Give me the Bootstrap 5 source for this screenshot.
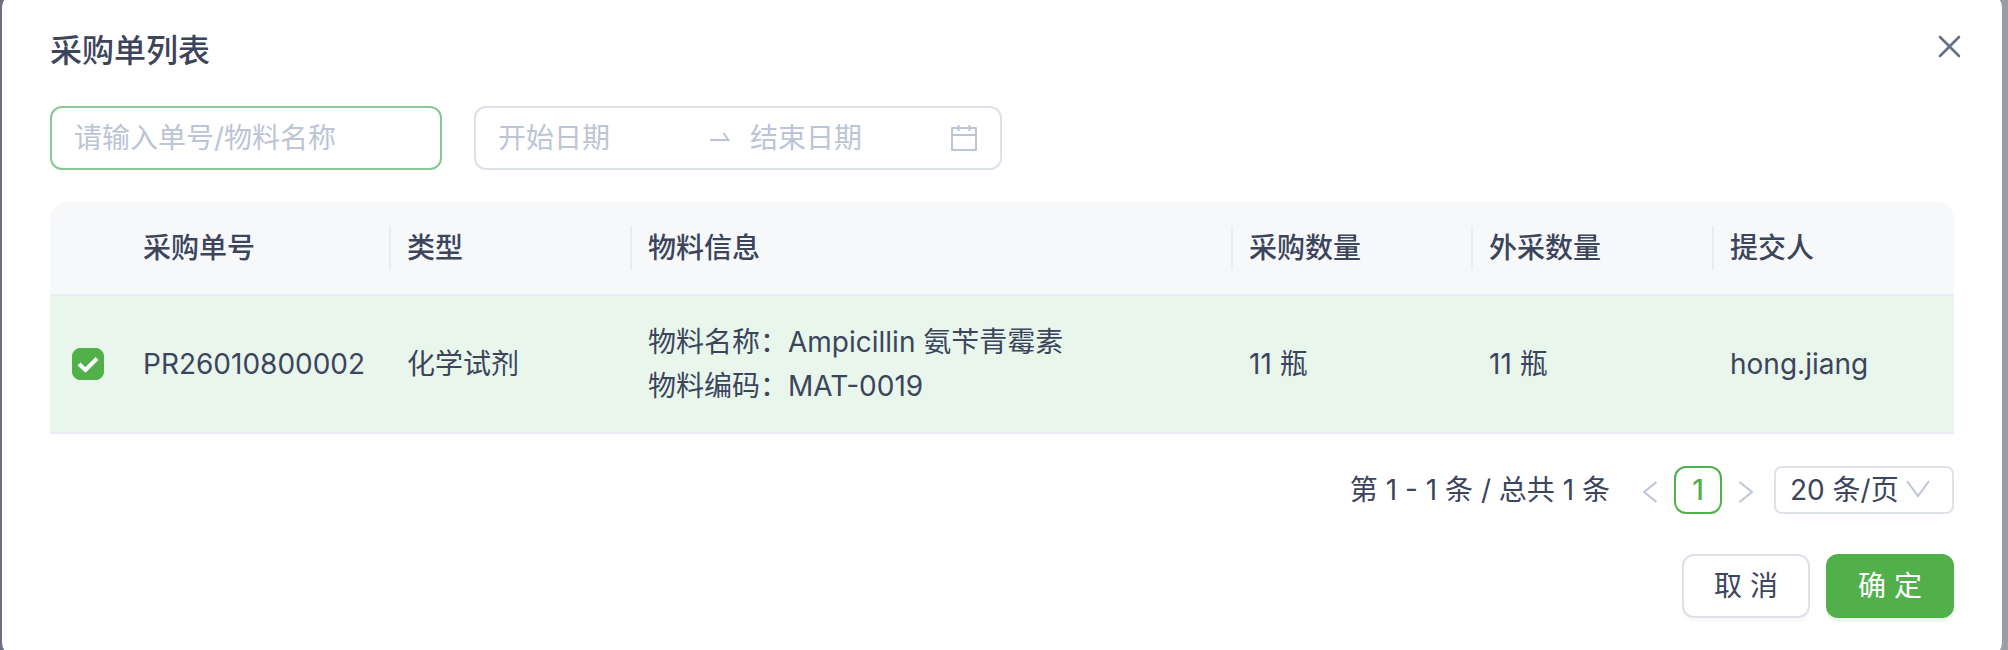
<!DOCTYPE html>
<html lang="zh-CN">
<head>
<meta charset="utf-8">
<meta name="viewport" content="width=device-width, initial-scale=1">
<title>采购单列表</title>
<link href="https://cdn.jsdelivr.net/npm/bootstrap@5.3.0/dist/css/bootstrap.min.css" rel="stylesheet">
<style>
  :root { --ink: #3c455c; --muted: #bcc4d6; --line: #dde1e9; --rule: #e9edf3; --green: #52b04a; }
  body {
    font-family: Inter, "Noto Sans CJK SC", sans-serif;
    font-size: 28px; line-height: 44px; color: var(--ink);
    background: linear-gradient(90deg, #6b7080, #9a9da6);
    overflow: hidden;
  }
  .dialog-panel { margin: -8px 6px 0 2px; padding: 36px 48px 40px; border-radius: 16px; background: #fff; }
  .dialog-title { font-size: 32px; line-height: 46px; font-weight: 500; }
  .icon-btn { border: 0; padding: 0; margin-right: -10px; background: none; line-height: 0; color: #667085; }
  .filters { gap: 32px; margin-top: 32px; }
  .field { height: 64px; border: 2px solid var(--line); border-radius: 12px; padding: 0 22px; background: #fff; color: var(--ink); }
  .field-search { width: 392px; border-color: #85c993; outline: 0; }
  .field-range { width: 528px; }
  .field-range input { flex: 1 1 0; min-width: 0; border: 0; padding: 0; outline: 0; background: none; color: var(--ink); }
  input::placeholder { color: var(--muted); opacity: 1; }
  .range-sep { width: 60px; }
  .muted { color: var(--muted); }
  .orders { table-layout: fixed; margin: 32px 0; color: var(--ink); border-collapse: separate; border-spacing: 0; }
  .orders > :not(caption) > * > * { padding: 24px 16px; border-bottom: 2px solid var(--rule); color: var(--ink); box-shadow: none; }
  .orders thead th { position: relative; font-weight: 500; background: #f7f8fa; }
  .orders thead th:first-child { border-top-left-radius: 16px; }
  .orders thead th:last-child { border-top-right-radius: 16px; }
  .orders thead th.split::after { content: ""; position: absolute; right: 0; top: 24px; bottom: 24px; width: 2px; background: var(--rule); }
  .orders tbody td { background: #e9f6ec; vertical-align: middle; }
  .orders .form-check-input { display: block; width: 32px; height: 32px; margin: 0 0 0 6px; border-radius: 8px; }
  .orders .form-check-input:checked {
    border-color: var(--green); background-color: var(--green); background-size: 32px 32px; background-position: center;
    background-image: url("data:image/svg+xml,%3Csvg xmlns='http://www.w3.org/2000/svg' viewBox='0 0 32 32'%3E%3Cpath d='M7 16l6.500 6L25 10.500' fill='none' stroke='%23fff' stroke-width='4'/%3E%3C/svg%3E");
  }
  .c-check { width: 77px; }
  .c-no { width: 264px; }
  .c-info { width: 601px; }
  .c-std { width: 240px; }
  .c-wide { width: 241px; }
  .pager button { width: 48px; height: 48px; border: 0; padding: 0; background: none; border-radius: 12px; }
  .pager .current { border: 2px solid var(--green); color: var(--green); font-weight: 500; line-height: 44px; }
  .page-size {
    appearance: none; width: 180px; height: 48px; margin-left: 4px; padding: 0 14px;
    border: 2px solid var(--line); border-radius: 8px; color: var(--ink);
    background: #fff url("data:image/svg+xml,%3Csvg xmlns='http://www.w3.org/2000/svg' width='24' height='20' viewBox='0 0 24 20'%3E%3Cpath d='M1 1l11 15L23 1' fill='none' stroke='%23bcc4d6' stroke-width='2'/%3E%3C/svg%3E") no-repeat right 22px center;
  }
  .actions { margin-top: 40px; }
  .btn-act { min-width: 128px; height: 64px; border: 2px solid var(--line); border-radius: 12px; padding: 0 16px; font-size: 28px; line-height: 44px; color: var(--ink); background: #fff; box-shadow: 0 4px 0 rgba(0,0,0,.02); }
  .btn-act.ok { border-color: var(--green); background: var(--green); color: #fff; box-shadow: 0 4px 0 rgba(82,176,74,.1); }
</style>
</head>
<body>
<main class="dialog-panel" role="dialog" aria-labelledby="dialogTitle">
  <header class="d-flex justify-content-between align-items-start">
    <h1 class="dialog-title mb-0" id="dialogTitle">采购单列表</h1>
    <button type="button" class="icon-btn" aria-label="关闭">
      <svg width="32" height="36" viewBox="0 0 32 36" fill="none" stroke="currentColor" stroke-width="2.600" stroke-linecap="round"><path d="M8 9l19 19M27 9L8 28"/></svg>
    </button>
  </header>

  <form class="filters d-flex flex-wrap">
    <input type="text" class="field field-search" placeholder="请输入单号/物料名称" aria-label="单号/物料名称">
    <div class="field field-range d-flex align-items-center">
      <input type="text" placeholder="开始日期" aria-label="开始日期">
      <span class="range-sep muted d-flex justify-content-center">
        <svg width="20" height="20" viewBox="0 0 20 20" fill="none" stroke="currentColor" stroke-width="2"><path d="M0 12h18.500L13.500 5"/></svg>
      </span>
      <input type="text" placeholder="结束日期" aria-label="结束日期">
      <svg class="muted ms-2" width="28" height="28" viewBox="0 0 28 28" fill="none" stroke="currentColor" stroke-width="2" stroke-linejoin="round"><path d="M2 4h24v22H2zM2 11h24M8.500 1v6M19.500 1v6"/></svg>
    </div>
  </form>

  <table class="table orders">
    <colgroup>
      <col class="c-check"><col class="c-no"><col class="c-wide"><col class="c-info"><col class="c-std"><col class="c-wide"><col class="c-std">
    </colgroup>
    <thead>
      <tr>
        <th scope="col" aria-label="选择"></th>
        <th scope="col" class="split">采购单号</th>
        <th scope="col" class="split">类型</th>
        <th scope="col" class="split">物料信息</th>
        <th scope="col" class="split">采购数量</th>
        <th scope="col" class="split">外采数量</th>
        <th scope="col">提交人</th>
      </tr>
    </thead>
    <tbody>
      <tr>
        <td><input class="form-check-input" type="checkbox" checked aria-label="选择 PR26010800002"></td>
        <td>PR26010800002</td>
        <td>化学试剂</td>
        <td><div>物料名称：Ampicillin 氨苄青霉素</div><div>物料编码：MAT-0019</div></td>
        <td>11 瓶</td>
        <td>11 瓶</td>
        <td>hong.jiang</td>
      </tr>
    </tbody>
  </table>

  <nav class="d-flex justify-content-end align-items-center" aria-label="分页">
    <span class="me-3">第 1 - 1 条 / 总共 1 条</span>
    <ul class="pagination pager mb-0">
      <li><button type="button" class="muted d-flex align-items-center justify-content-center" aria-label="上一页"><svg width="16" height="28" viewBox="0 0 16 28" fill="none" stroke="currentColor" stroke-width="2"><path d="M14.500 6L2 16l12.500 10"/></svg></button></li>
      <li><button type="button" class="current" aria-current="page">1</button></li>
      <li><button type="button" class="muted d-flex align-items-center justify-content-center" aria-label="下一页"><svg width="16" height="28" viewBox="0 0 16 28" fill="none" stroke="currentColor" stroke-width="2"><path d="M1.500 6L14 16 1.500 26"/></svg></button></li>
    </ul>
    <select class="page-size" aria-label="每页条数"><option>20 条/页</option><option>50 条/页</option></select>
  </nav>

  <footer class="actions d-flex justify-content-end gap-3">
    <button type="button" class="btn btn-act">取 消</button>
    <button type="button" class="btn btn-act ok">确 定</button>
  </footer>
</main>
<script src="https://cdn.jsdelivr.net/npm/bootstrap@5.3.0/dist/js/bootstrap.bundle.min.js"></script>
</body>
</html>
